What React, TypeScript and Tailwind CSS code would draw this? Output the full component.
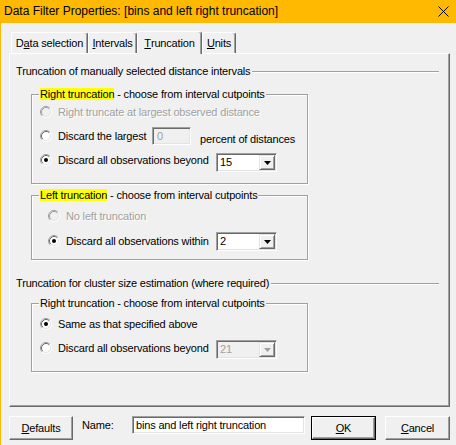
import React from 'react';

const Radio = ({ checked = false, disabled = false }: { checked?: boolean; disabled?: boolean }) => (
  <svg width="12" height="12" viewBox="0 0 12 12" className="shrink-0">
    <circle cx="6" cy="6" r="5" fill={disabled ? '#f0f0f0' : '#fff'} />
    <path d="M9.89 2.11 A5.5 5.5 0 0 0 2.11 9.89" fill="none" stroke="#a0a0a0" />
    <path d="M9.89 2.11 A5.5 5.5 0 0 1 2.11 9.89" fill="none" stroke="#fff" />
    <path d="M9.18 2.82 A4.5 4.5 0 0 0 2.82 9.18" fill="none" stroke={disabled ? '#a0a0a0' : '#696969'} />
    <path d="M9.18 2.82 A4.5 4.5 0 0 1 2.82 9.18" fill="none" stroke="#e3e3e3" />
    {checked && <circle cx="6" cy="6" r="2" fill={disabled ? '#a0a0a0' : '#000'} />}
  </svg>
);

const Combo = ({ value, disabled = false, className = '' }: { value: string; disabled?: boolean; className?: string }) => (
  <div
    className={`w-[61px] h-[19px] shrink-0 flex border border-t-[#a0a0a0] border-l-[#a0a0a0] border-r-white border-b-white shadow-[inset_1px_1px_0_#696969,inset_-1px_-1px_0_#e3e3e3] p-[1px] ${
      disabled ? 'bg-[#f0f0f0]' : 'bg-white'
    } ${className}`}
  >
    <div className={`flex-1 pl-[2px] flex items-center ${disabled ? 'text-[#a0a0a0]' : ''}`}>{value}</div>
    <div className="w-[16px] flex items-center justify-center bg-[#f0f0f0] border border-t-[#e3e3e3] border-l-[#e3e3e3] border-r-[#696969] border-b-[#696969] shadow-[inset_1px_1px_0_#fff,inset_-1px_-1px_0_#a0a0a0]">
      <svg width="7" height="4" viewBox="0 0 7 4">
        <path d="M0 0 H7 L3.5 4 Z" fill={disabled ? '#a0a0a0' : '#000'} />
      </svg>
    </div>
  </div>
);

const Tab = ({ children, w, active = false }: { children: React.ReactNode; w: string; active?: boolean }) => (
  <div
    className={`${w} flex items-center justify-center bg-[#f0f0f0] border-t border-l border-white border-r border-r-[#696969] rounded-tl-[2px] rounded-tr-[3px] shadow-[inset_-1px_0_0_#a0a0a0] ${
      active ? 'h-[23px] relative z-10' : 'mt-[1px] h-[21px]'
    }`}
  >
    {children}
  </div>
);

const Group = ({ legend, children, className = '' }: { legend: React.ReactNode; children: React.ReactNode; className?: string }) => (
  <fieldset className={`ml-[15px] w-[277px] border border-[#a0a0a0] shadow-[inset_1px_1px_0_#fff,1px_1px_0_#fff] ${className}`}>
    <legend className="ml-[7px] px-[1px] leading-[13px] bg-[#f0f0f0] whitespace-nowrap">{legend}</legend>
    {children}
  </fieldset>
);

const Header = ({ children, className = '' }: { children: React.ReactNode; className?: string }) => (
  <div className={`w-[423px] flex items-center ${className}`}>
    <span className="whitespace-nowrap">{children}</span>
    <div className="flex-1 ml-[2px] h-[2px] border-t border-[#a0a0a0] bg-white" />
  </div>
);

const Btn = ({ children, isDefault = false }: { children: React.ReactNode; isDefault?: boolean }) => (
  <div className={`w-[65px] h-[24px] ${isDefault ? 'border border-black' : ''}`}>
    <div className="w-full h-full flex items-center justify-center border-t border-l border-white border-r border-b border-r-[#696969] border-b-[#696969] shadow-[inset_-1px_-1px_0_#a0a0a0]">
      {children}
    </div>
  </div>
);

const dis = 'whitespace-nowrap text-[#a0a0a0] [text-shadow:1px_1px_0_#fff]';

export default function App() {
  return (
    <div className="w-[456px] h-[445px] bg-[#f0f0f0] border-l border-[#ffb900] flex flex-col text-[11px] leading-[13px] tracking-[-0.17px] text-black font-['Liberation_Sans',Arial,sans-serif] overflow-hidden">
      <div className="h-[23px] shrink-0 bg-[#ffb900] flex items-center justify-between pl-[3px] pr-[7px] tracking-normal">
        <span className="text-[12px]">Data Filter Properties: [bins and left right truncation]</span>
        <svg width="11" height="11" viewBox="0 0 11 11">
          <path d="M0.5 0.5 L10.5 10.5 M10.5 0.5 L0.5 10.5" stroke="#000" strokeWidth="1" />
        </svg>
      </div>

      <div className="ml-[8px] mt-[8px] flex flex-col">
        <div className="h-[22px] flex items-start pl-[2px]">
          <Tab w="w-[77px]">
            D<span className="underline">a</span>ta selection
          </Tab>
          <Tab w="w-[49px]">
            <span className="underline">I</span>ntervals
          </Tab>
          <Tab w="w-[65px]" active>
            <span className="underline">T</span>runcation
          </Tab>
          <Tab w="w-[34px]">
            <span className="underline">U</span>nits
          </Tab>
        </div>

        <div className="w-[441px] h-[354px] border-t border-l border-white border-r border-b border-r-[#696969] border-b-[#696969] shadow-[inset_-1px_-1px_0_#a0a0a0] pl-[6px] pt-[11px] flex flex-col">
          <Header>Truncation of manually selected distance intervals</Header>

          <Group
            className="mt-[10px]"
            legend={
              <>
                <span className="bg-[#ffff00]">Right truncation</span> - choose from interval cutpoints
              </>
            }
          >
            <div className="flex flex-col gap-[4px] pt-[1px] pb-[13px] pl-[8px]">
              <div className="h-[20px] flex items-center gap-[6px]">
                <Radio disabled />
                <span className={dis}>Right truncate at largest observed distance</span>
              </div>
              <div className="h-[20px] flex items-center gap-[6px]">
                <Radio />
                <span className="w-[88px] shrink-0 whitespace-nowrap">Discard the largest</span>
                <div className="w-[39px] h-[18px] shrink-0 flex items-center pl-[4px] text-[#a0a0a0] bg-[#f0f0f0] border border-t-[#a0a0a0] border-l-[#a0a0a0] border-r-white border-b-white shadow-[inset_1px_1px_0_#696969,inset_-1px_-1px_0_#e3e3e3]">
                  0
                </div>
                <span className="ml-[3px] mt-[6px] whitespace-nowrap">percent of distances</span>
              </div>
              <div className="h-[20px] flex items-center gap-[6px]">
                <Radio checked />
                <span className="w-[152px] shrink-0 whitespace-nowrap">Discard all observations beyond</span>
                <Combo value="15" className="self-start mt-[3px]" />
              </div>
            </div>
          </Group>

          <Group
            className="mt-[5px]"
            legend={
              <>
                <span className="bg-[#ffff00]">Left truncation</span> - choose from interval cutpoints
              </>
            }
          >
            <div className="flex flex-col gap-[5px] pt-[4px] pb-[8px] pl-[16px]">
              <div className="h-[20px] flex items-center gap-[6px]">
                <Radio disabled />
                <span className={dis}>No left truncation</span>
              </div>
              <div className="h-[20px] flex items-center gap-[6px]">
                <Radio checked />
                <span className="w-[144px] shrink-0 whitespace-nowrap">Discard all observations within</span>
                <Combo value="2" className="self-start mt-[1px]" />
              </div>
            </div>
          </Group>

          <Header className="mt-[17px]">Truncation for cluster size estimation (where required)</Header>

          <Group className="mt-[7px]" legend="Right truncation - choose from interval cutpoints">
            <div className="flex flex-col gap-[4px] pt-[4px] pb-[13px] pl-[8px]">
              <div className="h-[20px] flex items-center gap-[6px]">
                <Radio checked />
                <span className="whitespace-nowrap">Same as that specified above</span>
              </div>
              <div className="h-[20px] flex items-center gap-[6px]">
                <Radio />
                <span className="w-[152px] shrink-0 whitespace-nowrap">Discard all observations beyond</span>
                <Combo value="21" disabled className="self-start mt-[2px]" />
              </div>
            </div>
          </Group>
        </div>
      </div>

      <div className="mt-[9px] ml-[8px] flex items-start">
        <div className="w-[64px] h-[24px] shrink-0 flex items-center justify-center border-t border-l border-white border-r border-b border-r-[#696969] border-b-[#696969] shadow-[inset_-1px_-1px_0_#a0a0a0]">
          <span>
            <span className="underline">D</span>efaults
          </span>
        </div>
        <span className="ml-[9px] mt-[3px] w-[50px] shrink-0">Name:</span>
        <div className="w-[173px] h-[18px] shrink-0 flex items-center pl-[3px] whitespace-nowrap bg-white border border-t-[#a0a0a0] border-l-[#a0a0a0] border-r-white border-b-white shadow-[inset_1px_1px_0_#696969,inset_-1px_-1px_0_#e3e3e3]">
          bins and left right truncation
        </div>
        <div className="ml-[6px]">
          <Btn isDefault>
            <span>
              <span className="underline">O</span>K
            </span>
          </Btn>
        </div>
        <div className="ml-[9px]">
          <Btn>
            <span>
              <span className="underline">C</span>ancel
            </span>
          </Btn>
        </div>
      </div>
    </div>
  );
}
